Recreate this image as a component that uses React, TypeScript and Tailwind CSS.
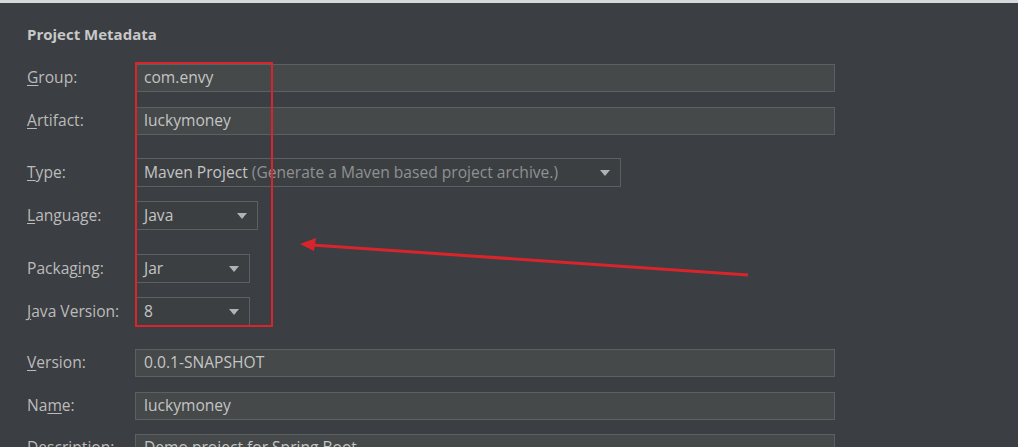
import React from "react";

const font = { fontFamily: '"Open Sans", "Noto Sans", sans-serif' };

function Label({ text, u }: { text: string; u: number }) {
  return (
    <span className="w-[108px] shrink-0 text-[15.6px] text-[#bbbbbb]">
      {text.slice(0, u)}
      <span className="underline underline-offset-2">{text[u]}</span>
      {text.slice(u + 1)}
    </span>
  );
}

function Field({ value, width = "w-[700px]" }: { value: string; width?: string }) {
  return (
    <div
      className={`${width} h-[28px] flex items-center px-2 border border-[#5c6063] bg-[#45494a] text-[15.6px] text-[#c4c4c4]`}
    >
      {value}
    </div>
  );
}

function Select({ value, hint, width }: { value: string; hint?: string; width: string }) {
  return (
    <div
      className={`${width} h-[29px] flex items-center justify-between pl-2 pr-[10px] border border-[#5c6063] bg-[#3c3f42] text-[15.6px] text-[#c4c4c4]`}
    >
      <span>
        {value}
        {hint && <span className="text-[#8f9193]"> {hint}</span>}
      </span>
      <svg width="10" height="6" viewBox="0 0 10 6">
        <path d="M0 0 H10 L5 6 Z" fill="#b0b2b4" />
      </svg>
    </div>
  );
}

function Row({ children, mt }: { children: React.ReactNode; mt: string }) {
  return <div className={`flex items-center ${mt}`}>{children}</div>;
}

export default function App() {
  return (
    <div className="w-[1018px] h-[447px] overflow-hidden bg-[#3b3e42] relative" style={font}>
      <div className="h-[3px] bg-[#d6d8da]" />
      <div className="pl-[27px] pt-[21px]">
        <div className="text-[15px] font-bold text-[#c8c8c8] leading-[20px]">Project Metadata</div>

        <Row mt="mt-[20px]">
          <Label text="Group:" u={0} />
          <Field value="com.envy" />
        </Row>
        <Row mt="mt-[15px]">
          <Label text="Artifact:" u={0} />
          <Field value="luckymoney" />
        </Row>
        <Row mt="mt-[23px]">
          <Label text="Type:" u={0} />
          <Select
            value="Maven Project"
            hint="(Generate a Maven based project archive.)"
            width="w-[486px]"
          />
        </Row>
        <Row mt="mt-[14px]">
          <Label text="Language:" u={0} />
          <Select value="Java" width="w-[123px]" />
        </Row>
        <Row mt="mt-[24px]">
          <Label text="Packaging:" u={6} />
          <Select value="Jar" width="w-[115px]" />
        </Row>
        <Row mt="mt-[14px]">
          <Label text="Java Version:" u={0} />
          <Select value="8" width="w-[115px]" />
        </Row>
        <Row mt="mt-[23px]">
          <Label text="Version:" u={0} />
          <Field value="0.0.1-SNAPSHOT" />
        </Row>
        <Row mt="mt-[15px]">
          <Label text="Name:" u={2} />
          <Field value="luckymoney" />
        </Row>
        <Row mt="mt-[14px]">
          <Label text="Description:" u={0} />
          <Field value="Demo project for Spring Boot" />
        </Row>
      </div>

      {/* red annotation box */}
      <div className="absolute left-[135px] top-[62px] w-[138px] h-[265px] border-2 border-[#d8252b]" />

      {/* red annotation arrow */}
      <svg className="absolute left-0 top-0" width="1018" height="447">
        <line x1="748" y1="275" x2="312" y2="245" stroke="#d8252b" strokeWidth="3" />
        <path d="M300 244 L316 238 L314 251 Z" fill="#d8252b" />
      </svg>
    </div>
  );
}
